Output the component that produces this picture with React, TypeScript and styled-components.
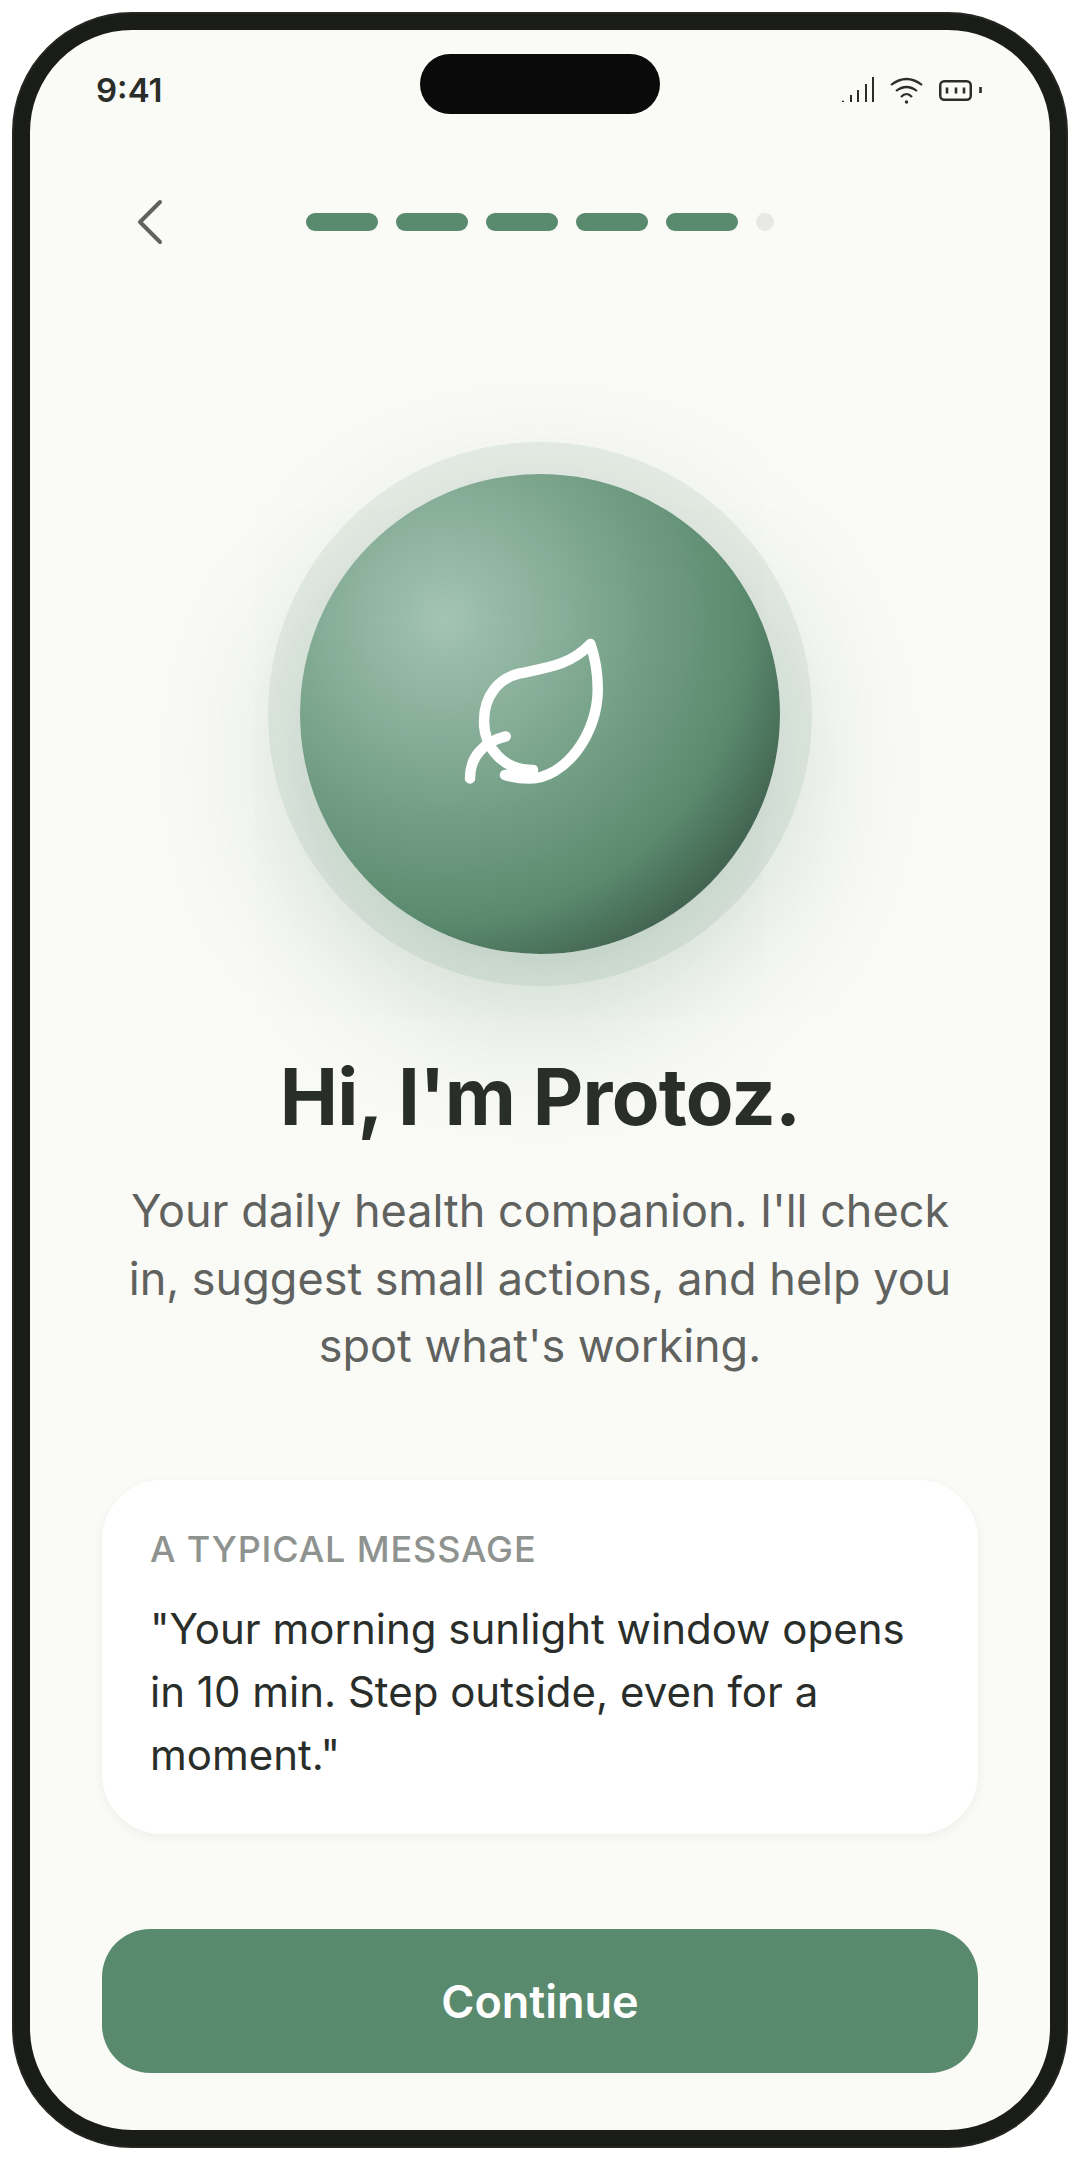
import React from 'react'
import styled, { createGlobalStyle } from 'styled-components'

const GlobalStyle = createGlobalStyle`
  html, body {
    margin: 0;
    padding: 0;
    background: #ffffff;
    font-family: 'Inter', 'Liberation Sans', sans-serif;
  }
`

const Page = styled.div`
  width: 1080px;
  height: 2160px;
  padding: 14px;
  box-sizing: border-box;
`

const Phone = styled.div`
  position: relative;
  width: 1052px;
  height: 2132px;
  box-sizing: border-box;
  border: 16px solid #1a1c18;
  border-radius: 118px;
  box-shadow: 0 0 0 2px #252723;
  background: #fafaf7;
  overflow: hidden;
  display: flex;
  flex-direction: column;
`

const Notch = styled.div`
  position: absolute;
  top: 24px;
  left: 390px;
  width: 240px;
  height: 60px;
  border-radius: 30px;
  background: #0a0a0a;
`

const StatusBar = styled.div`
  height: 36px;
  padding: 42px 65px 0 66px;
  display: flex;
  justify-content: space-between;
  align-items: center;
  color: #2a2e2a;
`

const Time = styled.span`
  font-size: 33px;
  font-weight: 600;
  line-height: 36px;
`

const Nav = styled.div`
  position: relative;
  height: 60px;
  margin-top: 84px;
  display: flex;
  align-items: center;
  justify-content: center;
`

const BackButton = styled.button`
  position: absolute;
  left: 103px;
  top: 4px;
  padding: 0;
  border: 0;
  background: none;
  width: 36px;
  height: 52px;
`

const Progress = styled.div`
  display: flex;
  gap: 18px;
`

const Step = styled.div<{ $done: boolean }>`
  width: ${p => (p.$done ? '72px' : '18px')};
  height: 18px;
  border-radius: 9px;
  background: ${p => (p.$done ? '#5a8a6e' : '#e8e8e4')};
`

const Hero = styled.div`
  margin-top: 222px;
  display: flex;
  justify-content: center;
`

const Orb = styled.div`
  width: 480px;
  height: 480px;
  border-radius: 50%;
  background: radial-gradient(circle at 30% 30%, #a3c4b2 0%, #5a8a6e 64%, #3d5c4a 82%);
  box-shadow: 0 0 0 32px rgba(90, 138, 110, 0.11), 0 48px 150px rgba(90, 138, 110, 0.35);
  display: flex;
  align-items: center;
  justify-content: center;
`

const Title = styled.h1`
  margin: 96px 0 0;
  text-align: center;
  font-size: 78px;
  line-height: 94px;
  font-weight: 700;
  letter-spacing: -0.8px;
  color: #2a2e2a;
`

const Lead = styled.p`
  margin: 33px 90px 0;
  text-align: center;
  font-size: 45px;
  line-height: 67.5px;
  color: #5f625f;
`

const Card = styled.div`
  margin: 100px 72px 0;
  padding: 45px 48px 48px;
  background: #ffffff;
  border-radius: 60px;
  box-shadow: 0 3px 12px rgba(0, 0, 0, 0.05);
`

const CardLabel = styled.div`
  font-size: 36px;
  line-height: 48px;
  font-weight: 500;
  letter-spacing: 0.85px;
  color: #8f9390;
`

const CardText = styled.div`
  margin-top: 24px;
  font-size: 42px;
  line-height: 63px;
  color: #2a2e2a;
`

const ContinueButton = styled.button`
  margin: 95px 72px 0;
  height: 144px;
  padding: 2px 0 0;
  border: 0;
  border-radius: 48px;
  background: #5a8a6e;
  color: #ffffff;
  font-family: inherit;
  font-size: 45px;
  font-weight: 600;
`

const STEPS = [true, true, true, true, true, false]

const StatusGlyphs = () => (
  <svg width="145" height="30" viewBox="0 0 145 30" fill="none" stroke="#2a2e2a">
    <path strokeWidth="2" d="M3 25.7V27M11 20v7M18 15v12M26 9v18M33 2v25" />
    <path strokeWidth="2.2" d="M51 10Q66.5-2 82 10M56 16Q66.5 8 77 16M61 22Q66.5 16 72 22" />
    <circle cx="66.5" cy="27" r="1.7" fill="#2a2e2a" stroke="none" />
    <rect x="100.25" y="6.25" width="30.5" height="18.5" rx="4" strokeWidth="2.5" />
    <path strokeWidth="2.6" d="M107 12.5v6M116 12.5v6M124 12.5v6M140.500 12v6" />
  </svg>
)

const Leaf = () => (
  <svg width="168" height="168" viewBox="0 0 24 24" fill="none" stroke="#ffffff" strokeWidth="1.5" strokeLinecap="round" strokeLinejoin="round">
    <path d="M11 20C7 20.100 4 17 4 13C4 9.500 6 6.900 9.100 6.200C13 5.400 16.400 5 19.200 2C19.900 4 20.250 6 20.250 8.500C20.250 15 15.500 21.200 10.500 21.200C9.300 21.200 8 21 7 20.700Z" />
    <path d="M2 21.200c0-3 1.850-5.200 5.100-6" />
  </svg>
)

export default function App() {
  return (
    <Page>
      <GlobalStyle />
      <Phone>
        <Notch />
        <StatusBar>
          <Time>9:41</Time>
          <StatusGlyphs />
        </StatusBar>
        <Nav>
          <BackButton aria-label="Back">
            <svg width="36" height="52" viewBox="0 0 36 52" fill="none" stroke="#5f625f" strokeWidth="4" strokeLinecap="round" strokeLinejoin="round">
              <path d="M27 6 7 26l20 20" />
            </svg>
          </BackButton>
          <Progress>
            {STEPS.map((done, i) => <Step key={i} $done={done} />)}
          </Progress>
        </Nav>
        <Hero>
          <Orb><Leaf /></Orb>
        </Hero>
        <Title>Hi, I'm Protoz.</Title>
        <Lead>Your daily health companion. I'll check in, suggest small actions, and help you spot what's working.</Lead>
        <Card>
          <CardLabel>A TYPICAL MESSAGE</CardLabel>
          <CardText>"Your morning sunlight window opens in 10 min. Step outside, even for a moment."</CardText>
        </Card>
        <ContinueButton>Continue</ContinueButton>
      </Phone>
    </Page>
  )
}
